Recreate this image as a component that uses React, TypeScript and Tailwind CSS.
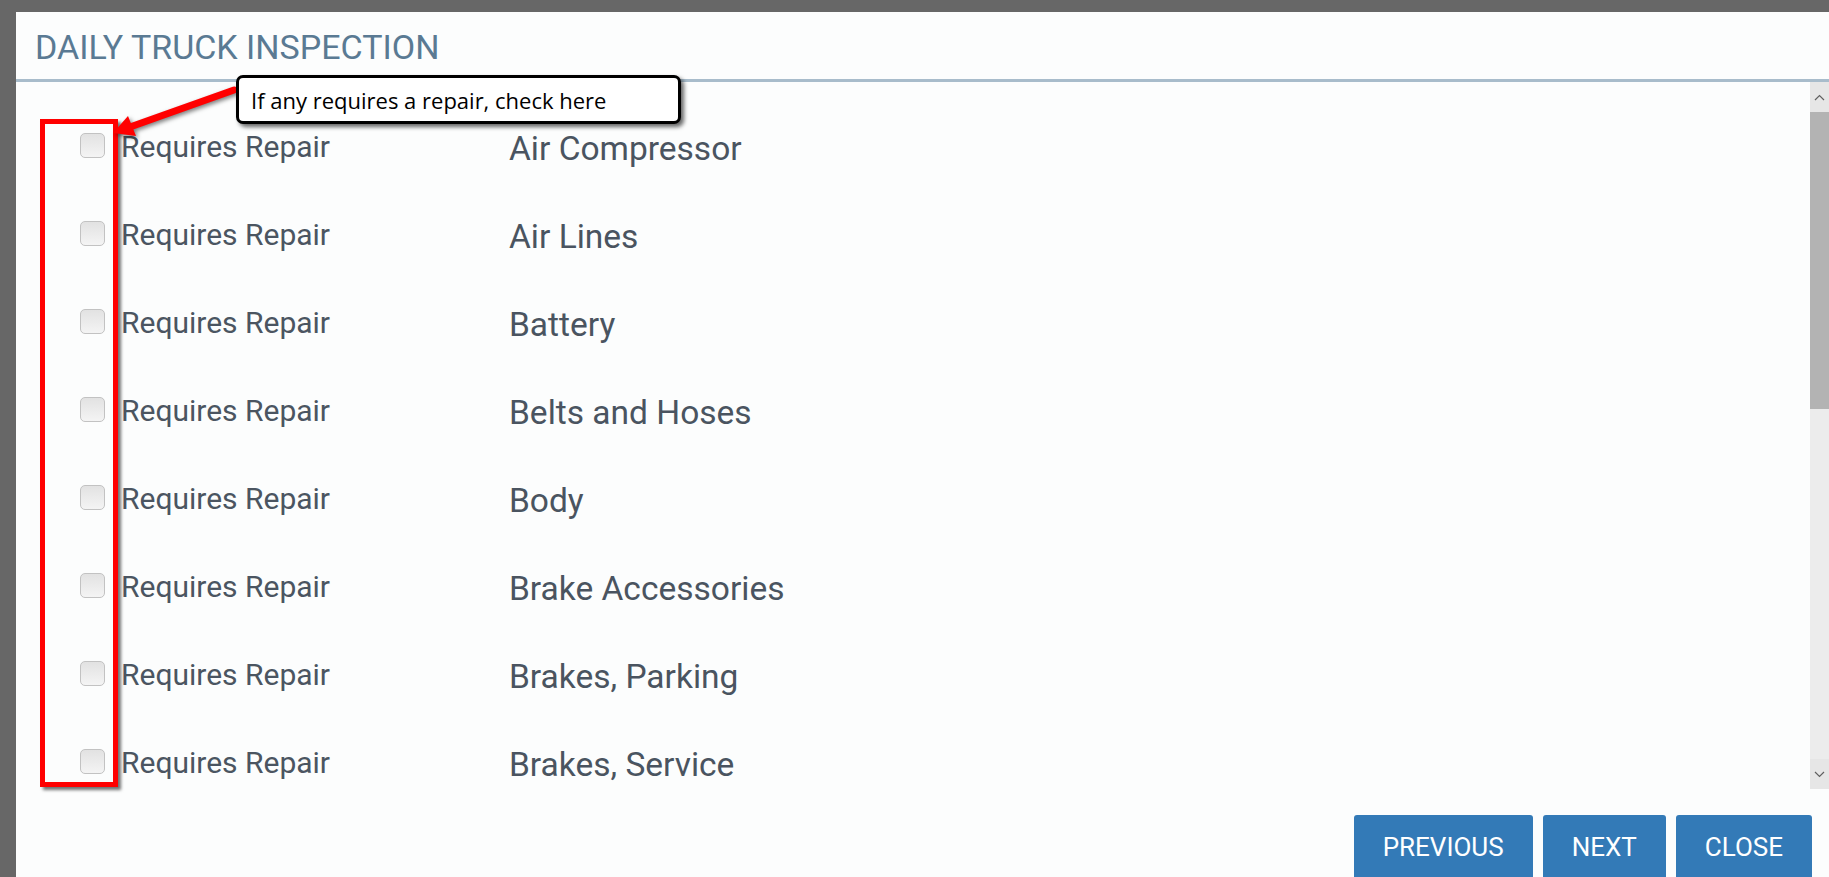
import React from "react";

const items = [
  "Air Compressor",
  "Air Lines",
  "Battery",
  "Belts and Hoses",
  "Body",
  "Brake Accessories",
  "Brakes, Parking",
  "Brakes, Service",
  "Clutch",
  "Coupling Devices",
];

function Checkbox() {
  return (
    <div className="w-[25px] h-[25px] rounded-[5px] border border-[#c2c2c2] bg-gradient-to-b from-[#e2e2e2] to-[#f4f4f4] shrink-0" />
  );
}

export default function App() {
  return (
    <div className="w-[1829px] h-[877px] bg-[#676767] overflow-hidden pt-[12px] pl-[16px] font-['Roboto',sans-serif]">
      <div className="relative bg-[#fcfdfd] h-[900px] flex flex-col">
        {/* header */}
        <div className="h-[70px] flex items-center pl-[19px] border-b-[3px] border-[#a8bccb] shrink-0">
          <h1 className="text-[34px] leading-none text-[#5a7a93] mt-[2px]">DAILY TRUCK INSPECTION</h1>
        </div>

        {/* body */}
        <div className="flex h-[707px] shrink-0">
          <div className="flex-1 overflow-hidden pt-[19px]">
            {items.map((it) => (
              <div key={it} className="h-[88px] flex items-center pl-[64px]">
                <Checkbox />
                <span className="ml-[16px] mt-[3px] w-[388px] text-[30px] text-[#4b5561] leading-none">Requires Repair</span>
                <span className="mt-[7px] text-[33.5px] text-[#4a5460] leading-none">{it}</span>
              </div>
            ))}
          </div>
          {/* scrollbar */}
          <div className="w-[19px] flex flex-col bg-[#ececec]">
            <div className="h-[30px] flex items-center justify-center bg-[#e6e6e6]">
              <svg width="11" height="7" viewBox="0 0 11 7">
                <path d="M1 6 L5.5 1.5 L10 6" fill="none" stroke="#606060" strokeWidth="1.2" />
              </svg>
            </div>
            <div className="h-[297px] bg-[#b3b3b3]" />
            <div className="flex-1" />
            <div className="h-[30px] flex items-center justify-center bg-[#e6e6e6]">
              <svg width="11" height="7" viewBox="0 0 11 7">
                <path d="M1 1 L5.5 5.5 L10 1" fill="none" stroke="#606060" strokeWidth="1.2" />
              </svg>
            </div>
          </div>
        </div>

        {/* footer */}
        <div className="flex justify-end gap-[10px] pt-[26px] pr-[17px]">
          <button className="h-[64px] px-[29px] bg-[#337ab7] text-white text-[26px] leading-none rounded-[3px]">PREVIOUS</button>
          <button className="h-[64px] px-[29px] bg-[#337ab7] text-white text-[26px] leading-none rounded-[3px]">NEXT</button>
          <button className="h-[64px] px-[29px] bg-[#337ab7] text-white text-[26px] leading-none rounded-[3px]">CLOSE</button>
        </div>

        {/* annotation: red box */}
        <div className="absolute left-[24px] top-[107px] w-[78px] h-[668px] border-[5px] border-[#ff0000] shadow-[3px_3px_3px_rgba(0,0,0,0.55)]" />

        {/* annotation: arrow */}
        <svg
          className="absolute left-0 top-0 drop-shadow-[2px_2px_2px_rgba(0,0,0,0.5)]"
          width="260"
          height="160"
          viewBox="0 0 260 160"
        >
          <line x1="218" y1="78" x2="114" y2="115" stroke="#ff0000" strokeWidth="7" strokeLinecap="round" />
          <polygon points="97,121 120,124 112,104" fill="#ff0000" />
        </svg>

        {/* annotation: callout */}
        <div className="absolute left-[220px] top-[63px] w-[445px] h-[49px] bg-white border-[3px] border-black rounded-[7px] shadow-[3px_3px_4px_rgba(0,0,0,0.6)] flex items-center pl-[12px]">
          <span className="font-['Open_Sans',sans-serif] text-[22px] text-black leading-none">If any requires a repair, check here</span>
        </div>
      </div>
    </div>
  );
}
